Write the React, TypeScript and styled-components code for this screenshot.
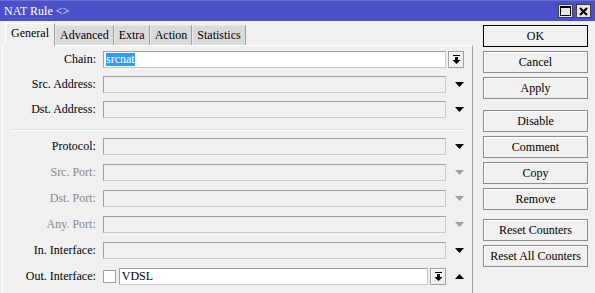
import React from "react";
import styled, { createGlobalStyle } from "styled-components";

const Global = createGlobalStyle`
  html, body { margin: 0; padding: 0; background: #f0f0f0; }
  * { box-sizing: border-box; }
`;

const Window = styled.div`
  width: 595px;
  height: 293px;
  background: #f0f0f0;
  font-family: "Liberation Serif", "DejaVu Serif", serif;
  font-size: 12px;
  color: #000;
  display: flex;
  flex-direction: column;
  overflow: hidden;
`;

const TitleBar = styled.div`
  height: 21px;
  background: #4b50c8;
  border-top: 1px solid #6a6ed6;
  display: flex;
  align-items: center;
  padding: 0 4px 0 4px;
  color: #fff;
  font-size: 12px;
`;

const Title = styled.span`
  flex: 1;
`;

const TitleBtn = styled.div`
  width: 15px;
  height: 14px;
  margin-left: 3px;
  background: #e4e4e4;
  border: 1px solid #404040;
  display: flex;
  align-items: center;
  justify-content: center;
`;

const Body = styled.div`
  flex: 1;
  display: flex;
`;

const LeftPane = styled.div`
  width: 473px;
  display: flex;
  flex-direction: column;
`;

const TabBar = styled.div`
  height: 24px;
  display: flex;
  align-items: flex-end;
  padding-left: 5px;
  padding-top: 1px;
`;

const Tab = styled.div<{ $active?: boolean }>`
  height: ${(p) => (p.$active ? 23 : 20)}px;
  padding: 0 ${(p) => (p.$active ? 5 : 4)}px;
  display: flex;
  align-items: center;
  background: ${(p) => (p.$active ? "#f0f0f0" : "#dadada")};
  border-top: 1px solid ${(p) => (p.$active ? "#ffffff" : "#e8e8e8")};
  border-left: 1px solid ${(p) => (p.$active ? "#ffffff" : "#e8e8e8")};
  border-right: 1px solid #a0a0a0;
  margin-bottom: ${(p) => (p.$active ? -1 : 0)}px;
  position: relative;
  z-index: ${(p) => (p.$active ? 1 : 0)};
  padding-bottom: ${(p) => (p.$active ? 3 : 0)}px;
`;

const Panel = styled.div`
  flex: 1;
  border-top: 1px solid #ffffff;
  border-left: 1px solid #ffffff;
  border-right: 1px solid #a0a0a0;
  margin-left: 2px;
  padding-top: 1px;
  display: flex;
  flex-direction: column;
`;

const Row = styled.div<{ $h?: number }>`
  height: ${(p) => p.$h ?? 26}px;
  display: flex;
  align-items: center;
`;

const Label = styled.div<{ $disabled?: boolean }>`
  width: 93px;
  text-align: right;
  color: ${(p) => (p.$disabled ? "#8a8a8a" : "#000")};
  white-space: nowrap;
`;

const Field = styled.div<{ $white?: boolean; $width: number; $ml?: number }>`
  width: ${(p) => p.$width}px;
  height: 17px;
  margin-left: ${(p) => p.$ml ?? 7}px;
  background: ${(p) => (p.$white ? "#ffffff" : "#f0f0f0")};
  border: 1px solid #a0a0a0;
  border-right-color: #c8c8c8;
  border-bottom-color: #c8c8c8;
  display: flex;
  align-items: center;
  padding-left: 2px;
`;

const Selected = styled.span`
  background: #3399ff;
  color: #fff;
  line-height: 13px;
`;

const ArrowCell = styled.div`
  width: 26px;
  display: flex;
  justify-content: center;
  align-items: center;
`;

const DropBtn = styled.div`
  width: 16px;
  height: 17px;
  margin-left: 2px;
  border: 1px solid #a0a0a0;
  background: #f0f0f0;
  box-shadow: inset 1px 1px 0 #ffffff;
  display: flex;
  align-items: center;
  justify-content: center;
`;

const Check = styled.div`
  width: 13px;
  height: 13px;
  margin-left: 7px;
  background: #fff;
  border: 1px solid #a0a0a0;
`;

const Separator = styled.div`
  height: 2px;
  border-top: 1px solid #dcdcdc;
  border-bottom: 1px solid #ffffff;
  margin: 7px 8px 2px 9px;
`;

const ButtonCol = styled.div`
  flex: 1;
  display: flex;
  flex-direction: column;
  padding: 4px 0 0 10px;
`;

const Btn = styled.div<{ $default?: boolean; $gap?: number }>`
  width: 105px;
  height: 22px;
  margin-top: ${(p) => p.$gap ?? 4}px;
  border: 1px solid ${(p) => (p.$default ? "#000" : "#8c8c8c")};
  box-shadow: inset 1px 1px 0 #ffffff;
  background: #f0f0f0;
  display: flex;
  align-items: center;
  justify-content: center;
  white-space: nowrap;
`;

const Down = ({ color = "#000" }: { color?: string }) => (
  <svg width="9" height="5" viewBox="0 0 9 5">
    <polygon points="0,0 9,0 4.5,5" fill={color} />
  </svg>
);

const Up = () => (
  <svg width="9" height="5" viewBox="0 0 9 5">
    <polygon points="0,5 9,5 4.5,0" fill="#000" />
  </svg>
);

const DownLine = () => (
  <svg width="9" height="9" viewBox="0 0 9 9">
    <rect x="1" y="0" width="7" height="1" fill="#000" />
    <rect x="3" y="2" width="3" height="3" fill="#000" />
    <polygon points="0.5,5 8.5,5 4.5,9" fill="#000" />
  </svg>
);

const MaxIcon = () => (
  <svg width="11" height="10" viewBox="0 0 11 10">
    <rect x="0.5" y="0.5" width="10" height="9" fill="none" stroke="#000" />
    <rect x="0" y="0" width="11" height="2" fill="#000" />
  </svg>
);

const CloseIcon = () => (
  <svg width="9" height="9" viewBox="0 0 9 9">
    <path d="M1 1 L8 8 M8 1 L1 8" stroke="#000" strokeWidth="2" />
  </svg>
);

type RowDef = { label: string; disabled?: boolean; h?: number };

const FieldRow = ({ label, disabled, h }: RowDef) => (
  <Row $h={h}>
    <Label $disabled={disabled}>{label}</Label>
    <Field $width={344} />
    <ArrowCell>
      <Down color={disabled ? "#a0a0a0" : "#000"} />
    </ArrowCell>
  </Row>
);

export default function App() {
  return (
    <>
      <Global />
      <Window>
        <TitleBar>
          <Title>NAT Rule &lt;&gt;</Title>
          <TitleBtn>
            <MaxIcon />
          </TitleBtn>
          <TitleBtn>
            <CloseIcon />
          </TitleBtn>
        </TitleBar>
        <Body>
          <LeftPane>
            <TabBar>
              <Tab $active>General</Tab>
              <Tab>Advanced</Tab>
              <Tab>Extra</Tab>
              <Tab>Action</Tab>
              <Tab>Statistics</Tab>
            </TabBar>
            <Panel>
              <Row $h={25}>
                <Label>Chain:</Label>
                <Field $white $width={343}>
                  <Selected>srcnat</Selected>
                </Field>
                <DropBtn>
                  <DownLine />
                </DropBtn>
              </Row>
              <FieldRow label="Src. Address:" h={25} />
              <FieldRow label="Dst. Address:" h={25} />
              <Separator />
              <FieldRow label="Protocol:" />
              <FieldRow label="Src. Port:" disabled />
              <FieldRow label="Dst. Port:" disabled />
              <FieldRow label="Any. Port:" disabled />
              <FieldRow label="In. Interface:" />
              <Row>
                <Label>Out. Interface:</Label>
                <Check />
                <Field $white $width={310} $ml={3}>
                  VDSL
                </Field>
                <DropBtn>
                  <DownLine />
                </DropBtn>
                <ArrowCell>
                  <Up />
                </ArrowCell>
              </Row>
            </Panel>
          </LeftPane>
          <ButtonCol>
            <Btn $default $gap={0}>OK</Btn>
            <Btn>Cancel</Btn>
            <Btn>Apply</Btn>
            <Btn $gap={11}>Disable</Btn>
            <Btn>Comment</Btn>
            <Btn>Copy</Btn>
            <Btn>Remove</Btn>
            <Btn $gap={9}>Reset Counters</Btn>
            <Btn>Reset All Counters</Btn>
          </ButtonCol>
        </Body>
      </Window>
    </>
  );
}
